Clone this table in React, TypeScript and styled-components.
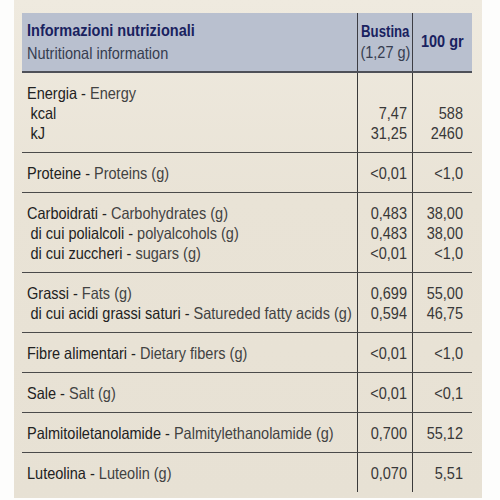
import styled, { createGlobalStyle } from "styled-components";

const GlobalStyle = createGlobalStyle`
    html, body {
        margin: 0;
        padding: 0;
        background: #fdfdfc;
    }
    * {
        box-sizing: border-box;
    }
`;

type Line = { it: string; en?: string; sub?: boolean };
type Entry = { lines: Line[]; a: string[]; b: string[] };

const ROWS: Entry[] = [
    {
        lines: [{ it: "Energia", en: "Energy" }, { it: "kcal", sub: true }, { it: "kJ", sub: true }],
        a: ["", "7,47", "31,25"],
        b: ["", "588", "2460"],
    },
    { lines: [{ it: "Proteine", en: "Proteins (g)" }], a: ["<0,01"], b: ["<1,0"] },
    {
        lines: [
            { it: "Carboidrati", en: "Carbohydrates (g)" },
            { it: "di cui polialcoli", en: "polyalcohols (g)", sub: true },
            { it: "di cui zuccheri", en: "sugars (g)", sub: true },
        ],
        a: ["0,483", "0,483", "<0,01"],
        b: ["38,00", "38,00", "<1,0"],
    },
    {
        lines: [
            { it: "Grassi", en: "Fats (g)" },
            { it: "di cui acidi grassi saturi", en: "Satureded fatty acids (g)", sub: true },
        ],
        a: ["0,699", "0,594"],
        b: ["55,00", "46,75"],
    },
    { lines: [{ it: "Fibre alimentari", en: "Dietary fibers (g)" }], a: ["<0,01"], b: ["<1,0"] },
    { lines: [{ it: "Sale", en: "Salt (g)" }], a: ["<0,01"], b: ["<0,1"] },
    {
        lines: [{ it: "Palmitoiletanolamide", en: "Palmitylethanolamide (g)" }],
        a: ["0,700"],
        b: ["55,12"],
    },
    { lines: [{ it: "Luteolina", en: "Luteolin (g)" }], a: ["0,070"], b: ["5,51"] },
];

export default function App() {
    return (
        <>
            <GlobalStyle />
            <Card>
                <Table>
                    <HeadRow>
                        <HeadTitle>
                            <TitleIt $origin="left" $squeeze={0.88}>Informazioni nutrizionali</TitleIt>
                            <TitleEn>Nutritional information</TitleEn>
                        </HeadTitle>
                        <HeadCol>
                            <TitleIt $origin="center" $squeeze={0.8}>Bustina</TitleIt>
                            <HeadSub>(1,27 g)</HeadSub>
                        </HeadCol>
                        <HeadCol>
                            <TitleIt $origin="center" $squeeze={0.88}>100 gr</TitleIt>
                        </HeadCol>
                    </HeadRow>
                    {ROWS.map((row, i) => (
                        <Row key={i} $last={i === ROWS.length - 1}>
                            <LabelCell>
                                {row.lines.map((l, j) => (
                                    <TextLine key={j} $sub={!!l.sub} $origin="left">
                                        <It>{l.it}</It>
                                        {l.en && (
                                            <>
                                                <It> - </It>
                                                <En>{l.en}</En>
                                            </>
                                        )}
                                    </TextLine>
                                ))}
                            </LabelCell>
                            <NumCell $pad={5}>
                                {row.a.map((v, j) => (
                                    <TextLine key={j} $origin="right">{v || "\u00a0"}</TextLine>
                                ))}
                            </NumCell>
                            <NumCell $pad={9}>
                                {row.b.map((v, j) => (
                                    <TextLine key={j} $origin="right">{v || "\u00a0"}</TextLine>
                                ))}
                            </NumCell>
                        </Row>
                    ))}
                </Table>
            </Card>
        </>
    );
}

// no narrow face installed: Arial metrics squeezed horizontally
const FONT = `"Liberation Sans", Arial, sans-serif`;
const SQUEEZE = 0.88;

const Card = styled.div`
    margin-left: 14px;
    width: 468px;
    height: 498px;
    padding: 13px 10px 0 8px;
    background: linear-gradient(180deg, #efeadf 0%, #e9e3d6 40%, #e7e1d4 100%);
    font-family: ${FONT};
`;

const Table = styled.div`
    width: 450px;
    display: flex;
    flex-direction: column;
`;

const Cols = styled.div`
    display: grid;
    grid-template-columns: 335px 55px 60px;
`;

const HeadRow = styled(Cols)`
    height: 60px;
    background: #b9c0cf;
    border-bottom: 2px solid #4e5058;
`;

const HeadTitle = styled.div`
    display: flex;
    flex-direction: column;
    justify-content: center;
    padding: 0 0 2px 5px;
    gap: 3px;
`;

const HeadCol = styled.div`
    display: flex;
    flex-direction: column;
    justify-content: center;
    align-items: center;
    border-left: 1px solid #3c3d44;
    padding-bottom: 2px;
    gap: 1px;
`;

const TitleIt = styled.div<{ $origin: string; $squeeze: number }>`
    font-size: 16.5px;
    font-weight: bold;
    line-height: 20px;
    white-space: nowrap;
    color: #19225f;
    transform: scaleX(${(p) => p.$squeeze});
    transform-origin: ${(p) => p.$origin};
`;

const TitleEn = styled.div`
    font-size: 16.5px;
    line-height: 20px;
    white-space: nowrap;
    color: #363d50;
    transform: scaleX(${SQUEEZE});
    transform-origin: left;
`;

const HeadSub = styled.div`
    font-size: 16.5px;
    line-height: 20px;
    white-space: nowrap;
    color: #363d50;
    transform: scaleX(${SQUEEZE});
    transform-origin: center;
`;

const Row = styled(Cols)<{ $last: boolean }>`
    border-bottom: ${(p) => (p.$last ? "none" : "1px solid #4a4a4a")};
`;

const LabelCell = styled.div`
    padding: 10px 0 9px 5px;
`;

const NumCell = styled.div<{ $pad: number }>`
    border-left: 1px solid #3a3a3a;
    text-align: right;
    padding: 10px ${(p) => p.$pad}px 9px 0;
    color: #383838;
`;

const TextLine = styled.div<{ $sub?: boolean; $origin: string }>`
    font-size: 16.5px;
    line-height: 20px;
    white-space: nowrap;
    padding-left: ${(p) => (p.$sub ? "4px" : "0")};
    transform: scaleX(${SQUEEZE});
    transform-origin: ${(p) => p.$origin};
`;

const It = styled.span`
    color: #222222;
`;

const En = styled.span`
    color: #424242;
`;
